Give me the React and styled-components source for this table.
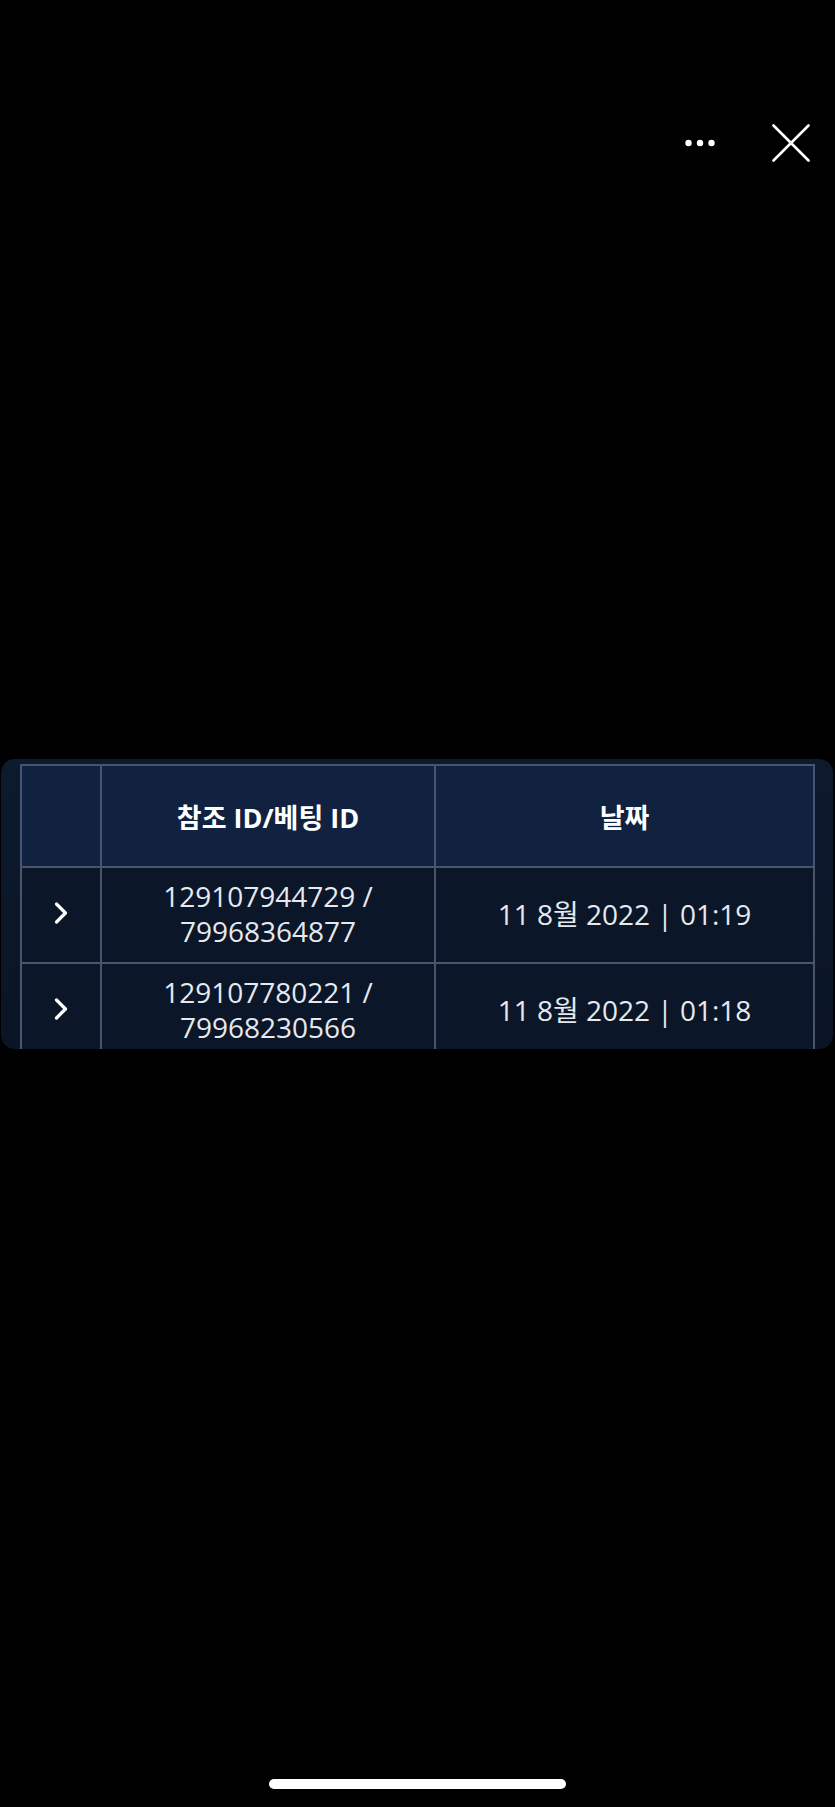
import styled, { createGlobalStyle } from 'styled-components'

const GlobalStyle = createGlobalStyle`
  html, body {
    margin: 0;
    padding: 0;
    background: #000;
  }
  body {
    font-family: "Open Sans", "Noto Sans CJK KR", sans-serif;
    color: #fff;
  }
`

const Screen = styled.div`
  width: 835px;
  height: 1807px;
  display: flex;
  flex-direction: column;
  background: #000;
`

const TopBar = styled.div`
  display: flex;
  justify-content: flex-end;
  align-items: center;
  gap: 57px;
  height: 38px;
  margin-top: 124px;
  padding-right: 25px;
`

const IconButton = styled.button`
  background: none;
  border: 0;
  padding: 0;
  display: flex;
  align-items: center;
  justify-content: center;
  color: #fff;
`

const Panel = styled.div`
  margin: 597px 2px 0 1px;
  height: 290px;
  box-sizing: border-box;
  padding: 5px 19px 0 19px;
  background: linear-gradient(180deg, #0d1a2e 0%, #0a1425 100%);
  border-radius: 14px;
  overflow: hidden;
`

const Table = styled.table`
  width: 795px;
  border-collapse: collapse;
  table-layout: fixed;
`

const HeadCell = styled.th`
  height: 100px;
  background: #10223f;
  border: 2px solid #46566f;
  font-size: 27px;
  font-weight: 700;
  color: #fff;
  text-align: center;
  padding: 0;
`

const Cell = styled.td`
  height: 92px;
  background: #0b1629;
  border: 2px solid #46566f;
  font-size: 28px;
  line-height: 35px;
  color: #e6e9ee;
  text-align: center;
  padding: 0 0 2px;
`

const Chevron = () => (
  <svg width="16" height="24" viewBox="0 0 16 24" fill="none">
    <path d="M3.5 3 L12.5 12 L3.5 21" stroke="#fff" strokeWidth="3.2" strokeLinecap="round" strokeLinejoin="round" />
  </svg>
)

const HomeIndicator = styled.div`
  width: 297px;
  height: 10px;
  border-radius: 5px;
  background: #fff;
  margin: auto auto 18px 269px;
`

const rows = [
  { ref: '129107944729 /', bet: '79968364877', date: '11 8월 2022 | 01:19' },
  { ref: '129107780221 /', bet: '79968230566', date: '11 8월 2022 | 01:18' },
]

export default function App() {
  return (
    <>
      <GlobalStyle />
      <Screen>
        <TopBar>
          <IconButton aria-label="more">
            <svg width="30" height="8" viewBox="0 0 30 8">
              <circle cx="3.5" cy="4" r="3.2" fill="#fff" />
              <circle cx="15" cy="4" r="3.2" fill="#fff" />
              <circle cx="26.5" cy="4" r="3.2" fill="#fff" />
            </svg>
          </IconButton>
          <IconButton aria-label="close">
            <svg width="38" height="38" viewBox="0 0 38 38">
              <path d="M1.5 1.5 L36.5 36.5 M36.5 1.5 L1.5 36.5" stroke="#fff" strokeWidth="2.6" strokeLinecap="round" />
            </svg>
          </IconButton>
        </TopBar>
        <Panel>
          <Table>
            <colgroup>
              <col style={{ width: 80 }} />
              <col style={{ width: 334 }} />
              <col />
            </colgroup>
            <thead>
              <tr>
                <HeadCell />
                <HeadCell>참조 ID/베팅 ID</HeadCell>
                <HeadCell>날짜</HeadCell>
              </tr>
            </thead>
            <tbody>
              {rows.map((r) => (
                <tr key={r.ref}>
                  <Cell>
                    <Chevron />
                  </Cell>
                  <Cell>
                    {r.ref}
                    <br />
                    {r.bet}
                  </Cell>
                  <Cell>{r.date}</Cell>
                </tr>
              ))}
            </tbody>
          </Table>
        </Panel>
        <HomeIndicator />
      </Screen>
    </>
  )
}
